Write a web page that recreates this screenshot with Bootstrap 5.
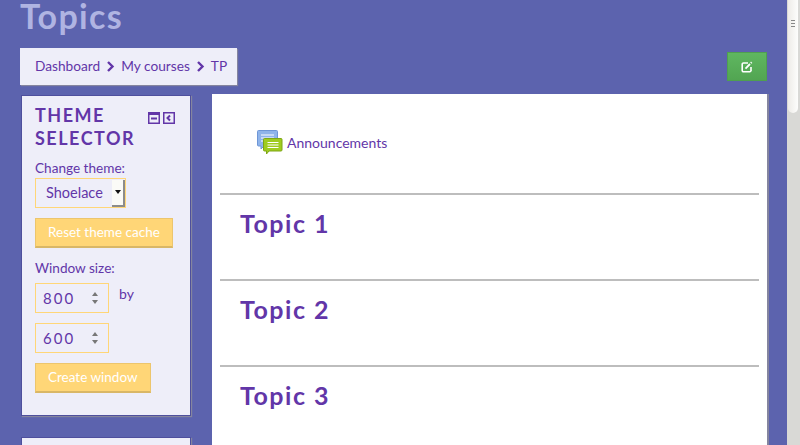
<!DOCTYPE html>
<html lang="en">
<head>
    <meta charset="UTF-8">
    <meta name="viewport" content="width=device-width, initial-scale=1.0">
    <title>Topics</title>
    <link href="https://cdn.jsdelivr.net/npm/bootstrap@5.3.2/dist/css/bootstrap.min.css" rel="stylesheet">
    <style>
        html, body {
            height: 445px;
            overflow: hidden;
        }

        body {
            background-color: #5c63ae;
            color: #6236a8;
            font-family: "Lato", "Liberation Sans", sans-serif;
            font-size: 14px;
        }

        a {
            color: #6236a8;
            text-decoration: none;
        }

        .page-shell {
            height: 445px;
            overflow: hidden;
        }

        .page-area {
            width: 787px;
            padding: 0 20px 0 20px;
            flex: none;
        }

        .page-title {
            height: 48px;
            margin: 0;
            color: #b0b4e2;
            font-family: "Lato", sans-serif;
            font-size: 34px;
            font-weight: 700;
            letter-spacing: 1.3px;
            line-height: 32px;
        }

        .crumb-bar {
            width: 217px;
            height: 37px;
            padding: 0 15px;
            background: #eeeef9;
            box-shadow: 1px 1px 1px #85859f;
            font-size: 13.7px;
            gap: 6px;
            white-space: nowrap;
        }

        .crumb-sep {
            width: 9px;
            height: 11px;
            flex: none;
        }

        .edit-btn {
            width: 40px;
            height: 29px;
            margin-top: 4px;
            background: linear-gradient(#5fb760, #52a552);
            border: 1px solid #4f9f50;
            border-radius: 0;
        }

        .columns {
            margin-top: 9px;
            gap: 21px;
        }

        .side-col {
            width: 170px;
            margin: 1px 0 0 1px;
            flex: none;
        }

        .side-block {
            padding: 8px 13px 22px;
            margin-bottom: 21px;
            background: #eeeef9;
            border: 1px solid #4e4f9d;
            box-shadow: 1px 1px 1px #85859f;
        }

        .side-title {
            margin: 0 0 9px;
            color: #6236a8;
            font-family: "Lato", sans-serif;
            font-size: 18px;
            font-weight: 700;
            letter-spacing: 1.5px;
            line-height: 23px;
        }

        .side-tools {
            top: 16px;
            right: 15px;
            gap: 3px;
        }

        .side-label {
            margin-bottom: 1px;
            font-size: 13.6px;
            line-height: 18px;
        }

        .window-label {
            margin-top: 11px;
            margin-bottom: 6px;
        }

        .size-row {
            margin-bottom: 10px;
        }

        .theme-select, .num-box {
            height: 30px;
            background: #eeeef9;
            border: 1px solid #ffd677;
            color: #6236a8;
            font-size: 14.5px;
        }

        .theme-select {
            width: 91px;
            padding-left: 10px;
        }

        .select-arrow {
            width: 13px;
            height: 27px;
            margin-left: auto;
            background: #fbfbf7;
            border-right: 2px solid #8c8c8c;
            border-bottom: 2px solid #8c8c8c;
        }

        .select-arrow::after {
            content: "";
            border-top: 4px solid #111;
            border-left: 3px solid transparent;
            border-right: 3px solid transparent;
        }

        .num-box {
            width: 74px;
            padding: 0 10px 0 7px;
            font-size: 15px;
            letter-spacing: 2px;
        }

        .by-text {
            margin: 2px 0 0 10px;
            line-height: 18px;
        }

        .spin-arrows {
            gap: 4px;
        }

        .spin-arrows i {
            display: block;
            border-left: 3px solid transparent;
            border-right: 3px solid transparent;
        }

        .spin-arrows i:first-child {
            border-bottom: 4px solid #777;
        }

        .spin-arrows i:last-child {
            border-top: 4px solid #777;
        }

        .sun-btn {
            height: 30px;
            padding: 0 12px;
            margin-top: 10px;
            background: #ffd677;
            border: 1px solid #ecc56d;
            border-bottom: 2px solid #d9b767;
            border-radius: 0;
            color: #fff;
            font-size: 13.5px;
            white-space: nowrap;
        }

        .sun-btn:hover {
            background: #ffd677;
            color: #fff;
        }

        .main-panel {
            width: 555px;
            height: 360px;
            padding: 0 8px;
            background: #fff;
            box-shadow: 2px 0 0 #85859f;
            flex: none;
        }

        .news-row {
            height: 99px;
            padding: 0 0 2px 37px;
        }

        .topic-row {
            height: 86px;
            padding: 13px 20px 0;
            border-top: 2px solid #bdbdbd;
        }

        .topic-row h3 {
            margin: 0;
            color: #6236a8;
            font-family: "Lato", sans-serif;
            font-size: 25px;
            font-weight: 700;
            letter-spacing: 1.5px;
        }

        .fake-scroll {
            width: 13px;
            height: 445px;
            padding-left: 1px;
            background: #d9d9d6;
            flex: none;
        }

        .fake-thumb {
            width: 10px;
            height: 113px;
            padding-top: 20px;
            background: linear-gradient(90deg, #eeece8, #fdfdfc);
            border-radius: 0 0 6px 6px;
            gap: 2px;
        }

        .fake-thumb i {
            display: block;
            width: 4px;
            height: 1px;
            background: #888;
        }
    </style>
</head>
<body>
    <div class="page-shell d-flex">
        <div class="page-area">
            <h1 class="page-title">Topics</h1>

            <div class="d-flex justify-content-between align-items-start">
                <div class="crumb-bar d-inline-flex align-items-center">
                    <a href="#">Dashboard</a>
                    <svg class="crumb-sep" viewBox="0 0 9 11"><path d="M2 1 6.500 5.500 2 10" fill="none" stroke="#6236a8" stroke-width="2.400"/></svg>
                    <a href="#">My courses</a>
                    <svg class="crumb-sep" viewBox="0 0 9 11"><path d="M2 1 6.500 5.500 2 10" fill="none" stroke="#6236a8" stroke-width="2.400"/></svg>
                    <a href="#">TP</a>
                </div>
                <button class="btn edit-btn d-flex align-items-center justify-content-center p-0" type="button" aria-label="Edit">
                    <svg width="12" height="12" viewBox="0 0 12 12" fill="none">
                        <path d="M7 2H2.500A1.200 1.200 0 0 0 1.200 3.200v6.300a1.200 1.200 0 0 0 1.300 1.200h6.300a1.200 1.200 0 0 0 1.200-1.300V6" stroke="#fff" stroke-width="1.600"/>
                        <path d="M4.500 7.600 9 3" stroke="#fff" stroke-width="1.800"/>
                        <path d="M10 .6l1.300 1.300-.8.8-1.300-1.300z" fill="#fff"/>
                    </svg>
                </button>
            </div>

            <div class="columns d-flex align-items-start">
                <div class="side-col">
                    <div class="side-block position-relative">
                        <h4 class="side-title">THEME<br>SELECTOR</h4>
                        <div class="side-tools position-absolute d-flex">
                            <svg width="12" height="12" viewBox="0 0 12 12"><rect x=".75" y=".75" width="10.500" height="10.500" fill="none" stroke="#6236a8" stroke-width="1.500"/><rect x="1" y="1" width="10" height="2" fill="#6236a8"/><rect x="3" y="5.500" width="6" height="2" fill="#6236a8"/></svg>
                            <svg width="12" height="12" viewBox="0 0 12 12"><rect x=".75" y=".75" width="10.500" height="10.500" fill="none" stroke="#6236a8" stroke-width="1.500"/><path d="M7 3.500 4.500 6 7 8.500" fill="none" stroke="#6236a8" stroke-width="2"/></svg>
                        </div>
                        <label class="side-label d-block">Change theme:</label>
                        <div class="theme-select d-flex align-items-center">
                            Shoelace
                            <span class="select-arrow d-flex align-items-center justify-content-center"></span>
                        </div>
                        <button class="btn sun-btn d-block" type="button">Reset theme cache</button>
                        <label class="side-label window-label d-block">Window size:</label>
                        <div class="size-row d-flex align-items-start">
                            <div class="num-box d-flex align-items-center justify-content-between">800<span class="spin-arrows d-flex flex-column"><i></i><i></i></span></div>
                            <span class="by-text">by</span>
                        </div>
                        <div class="num-box d-flex align-items-center justify-content-between">600<span class="spin-arrows d-flex flex-column"><i></i><i></i></span></div>
                        <button class="btn sun-btn d-block" type="button">Create window</button>
                    </div>
                    <div class="side-block"></div>
                </div>

                <div class="main-panel">
                    <div class="news-row d-flex align-items-center gap-1">
                        <svg width="26" height="25" viewBox="0 0 26 25">
                            <path d="M1.500.5h18a1 1 0 0 1 1 1V15a1 1 0 0 1-1 1H7l-3 3v-3H1.500a1 1 0 0 1-1-1V1.500a1 1 0 0 1 1-1z" fill="#8fb4ea" stroke="#6e96d6"/>
                            <path d="M4 5h13M4 8h13M4 11h6" stroke="#fff"/>
                            <path d="M7.500 8.500h16.500a1 1 0 0 1 1 1V20a1 1 0 0 1-1 1H12l-2.500 3v-3h-2a1 1 0 0 1-1-1V9.500a1 1 0 0 1 1-1z" fill="#9fcc1f" stroke="#7ea616"/>
                            <path d="M10.500 12.500h11M10.500 15h11M10.500 17.500h11" stroke="#fff"/>
                        </svg>
                        <a href="#">Announcements</a>
                    </div>
                    <div class="topic-row"><h3>Topic 1</h3></div>
                    <div class="topic-row"><h3>Topic 2</h3></div>
                    <div class="topic-row"><h3>Topic 3</h3></div>
                </div>
            </div>
        </div>
        <div class="fake-scroll">
            <div class="fake-thumb d-flex flex-column align-items-center">
                <i></i><i></i><i></i>
            </div>
        </div>
    </div>

    <script src="https://cdn.jsdelivr.net/npm/bootstrap@5.3.2/dist/js/bootstrap.bundle.min.js"></script>
</body>
</html>
